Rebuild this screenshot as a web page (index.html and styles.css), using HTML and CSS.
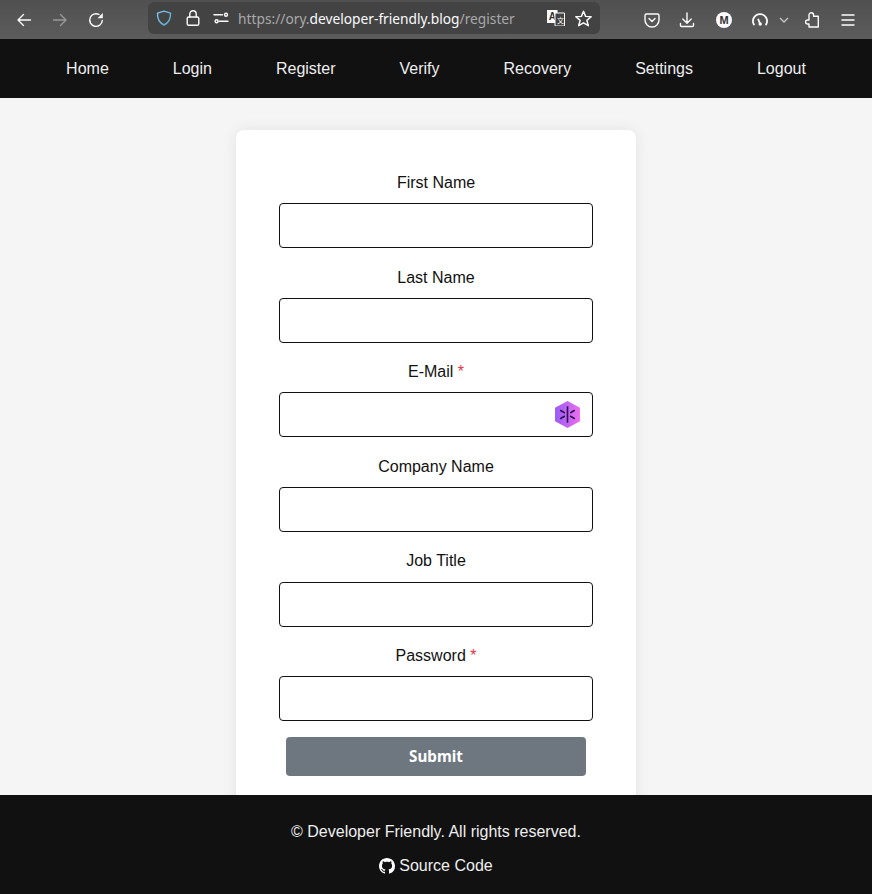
FILE: index.html
```html
<!DOCTYPE html>
<html lang="en">
<head>
<meta charset="utf-8">
<title>Register</title>
<link rel="stylesheet" href="styles.css">
</head>
<body>
<div class="chrome">
  <div class="chrome-left">
    <svg class="ic" viewBox="0 0 16 16"><path d="M14.5 8H2M7.5 2.5 2 8l5.500 5.500"/></svg>
    <svg class="ic dim" viewBox="0 0 16 16"><path d="M1.500 8H14M8.500 2.500 14 8l-5.500 5.500"/></svg>
    <svg class="ic" viewBox="0 0 16 16"><path d="M14.300 8.500A6.300 6.300 0 1 1 11 2.500"/><path class="fill" d="M14.800 1v5.300h-5.300z"/></svg>
  </div>
  <div class="urlbar">
    <svg class="ic shield" viewBox="0 0 16 16"><defs><linearGradient id="sg" x1="0" y1="0" x2="1" y2="1"><stop offset="0" stop-color="#7ec8f0"/><stop offset="1" stop-color="#5aa6c8"/></linearGradient></defs><path stroke="url(#sg)" d="M8 1.200 14.500 3.200C14.800 9 12.500 12.800 8 15 3.500 12.800 1.200 9 1.500 3.200z"/></svg>
    <svg class="ic lock" viewBox="0 0 16 16"><rect x="2.200" y="7" width="11.600" height="8.300" rx="1.500"/><path d="M4.800 7V4a3.200 3.200 0 0 1 6.400 0V7"/></svg>
    <svg class="ic perm" viewBox="0 0 16 16"><path d="M1 4.700h8.500M6 11.300h9"/><circle cx="13" cy="4.700" r="1.500"/><circle cx="3.600" cy="11.300" r="1.500"/></svg>
    <span class="url"><span class="url-dim">https://ory.</span>developer-friendly.blog<span class="url-dim">/register</span></span>
    <svg class="translate" viewBox="0 0 18 16"><path class="tr-a" d="M0 0h10.500v13H0z"/><text x="1.800" y="10" class="tr-t">A</text><path class="tr-b" d="M8 3h9.500v13H8z"/><text x="10" y="13" class="tr-u">文</text></svg>
    <svg class="ic star" viewBox="0 0 16 16"><path d="M8 1.200 10 6l5.200.4-4 3.400 1.300 5L8 12.100 3.500 14.800l1.300-5-4-3.400L6 6z"/></svg>
  </div>
  <div class="chrome-right">
    <svg class="ic pocket" viewBox="0 0 16 16"><path d="M1 3.500A1.500 1.500 0 0 1 2.500 2h11A1.500 1.500 0 0 1 15 3.500V8a7 7 0 0 1-14 0z"/><path d="M5 6.500 8 9.500l3-3"/></svg>
    <svg class="ic dl" viewBox="0 0 16 16"><path d="M8 1v10M3.800 7 8 11.200 12.200 7M1.500 11.500v2a1 1 0 0 0 1 1h11a1 1 0 0 0 1-1v-2"/></svg>
    <span class="avatar">M</span>
    <svg class="ic gauge" viewBox="0 0 16 16"><path d="M1.900 12.500A7 7 0 1 1 14.100 12.500"/><path d="M6.300 7.500 8 11.500"/><circle class="fill" cx="8.200" cy="12" r="1.700"/></svg>
    <svg class="chev" viewBox="0 0 10 6"><path d="M1 1l4 4 4-4"/></svg>
    <svg class="ic ext" viewBox="0 0 16 16"><path d="M6 4.200V3a2.300 2.300 0 0 1 4.600 0v1.200h4.700V15H6v-3H4.600a2 2 0 0 1 0-4H6z"/></svg>
    <svg class="ic menu" viewBox="0 0 16 16"><path d="M2 3h12M2 8h12M2 13h12"/></svg>
  </div>
</div>
<nav class="nav">
  <a href="#">Home</a>
  <a href="#">Login</a>
  <a href="#">Register</a>
  <a href="#">Verify</a>
  <a href="#">Recovery</a>
  <a href="#">Settings</a>
  <a href="#">Logout</a>
</nav>
<main class="main">
  <form class="card">
    <div class="field"><label>First Name</label><div class="control"></div></div>
    <div class="field"><label>Last Name</label><div class="control"></div></div>
    <div class="field"><label>E-Mail <span class="req">*</span></label><div class="control">
      <svg class="hex" viewBox="0 0 24 26"><defs><linearGradient id="hg" x1="0" y1="0" x2="1" y2="0"><stop offset="0" stop-color="#9a5cf5"/><stop offset="1" stop-color="#ee6cf0"/></linearGradient></defs><path fill="url(#hg)" d="M12 0 24 6.500v13L12 26 0 19.500v-13z"/><path class="hex-l" d="M12 5v16M5 9l4.500 2.500M19 9l-4.500 2.500M5 17l4.500-2.500M19 17l-4.500-2.500"/></svg>
    </div></div>
    <div class="field"><label>Company Name</label><div class="control"></div></div>
    <div class="field"><label>Job Title</label><div class="control"></div></div>
    <div class="field"><label>Password <span class="req">*</span></label><div class="control"></div></div>
    <button type="button" class="submit">Submit</button>
  </form>
</main>
<footer class="footer">
  <p>© Developer Friendly. All rights reserved.</p>
  <a href="#" class="source"><svg class="gh" viewBox="0 0 16 16"><path d="M8 0C3.580 0 0 3.580 0 8c0 3.540 2.290 6.530 5.470 7.590.4.070.55-.17.55-.38 0-.19-.01-.82-.01-1.490-2.010.37-2.530-.49-2.690-.94-.09-.23-.48-.94-.82-1.130-.28-.15-.68-.52-.01-.53.630-.01 1.080.58 1.230.82.720 1.210 1.870.870 2.330.66.070-.52.280-.87.510-1.070-1.780-.2-3.640-.89-3.640-3.950 0-.87.310-1.590.82-2.150-.08-.2-.36-1.020.08-2.120 0 0 .67-.21 2.200.82.640-.18 1.320-.27 2-.27s1.360.09 2 .27c1.530-1.040 2.200-.82 2.200-.82.440 1.100.16 1.920.08 2.120.51.560.82 1.270.82 2.150 0 3.070-1.870 3.750-3.650 3.950.290.25.540.730.540 1.480 0 1.070-.01 1.930-.01 2.200 0 .21.150.460.550.380A8.013 8.013 0 0 0 16 8c0-4.420-3.580-8-8-8z"/></svg> Source Code</a>
</footer>
</body>
</html>
```
FILE: styles.css
```css
* { box-sizing: border-box; }
html, body { margin: 0; height: 100%; }
body {
  display: flex;
  flex-direction: column;
  height: 894px;
  overflow: hidden;
  font-family: "Liberation Sans", Arial, sans-serif;
  font-size: 16px;
  color: #111;
  background: #f5f5f5;
}

/* browser toolbar */
.chrome {
  flex: 0 0 39px;
  display: flex;
  align-items: center;
  background: linear-gradient(#505050, #5c5c5c);
  padding: 0 20px 0 16px;
}
.chrome-left { display: flex; align-items: center; gap: 20px; width: 132px; flex: none; }
.ic {
  width: 16px;
  height: 16px;
  flex: none;
  fill: none;
  stroke: #fbfbfe;
  stroke-width: 1.4;
  stroke-linecap: round;
  stroke-linejoin: round;
}
.ic .fill { fill: #fbfbfe; stroke: none; }
.dim { opacity: 0.4; }
.urlbar {
  flex: 0 0 452px;
  height: 32px;
  margin-top: -3px;
  display: flex;
  align-items: center;
  background: #434343;
  border-radius: 6px;
  padding: 0 8px 0 8px;
}
.shield { margin-right: 13px; }
.lock { margin-right: 12px; }
.perm { margin-right: 9px; }
.url {
  flex: 1;
  font-family: "Noto Sans", sans-serif;
  font-size: 13.75px;
  color: #fbfbfe;
  white-space: nowrap;
}
.url-dim { color: #a9a9ab; }
.translate { width: 18px; height: 16px; margin-right: 10px; }
.tr-a { fill: #fbfbfe; }
.tr-b { fill: #434343; stroke: #fbfbfe; stroke-width: 1; }
.tr-t { font: bold 10px "Liberation Sans", sans-serif; fill: #333; }
.tr-u { font: 7px "Noto Sans CJK SC", sans-serif; fill: #fbfbfe; }
.star { width: 17px; height: 17px; }
.chrome-right { display: flex; align-items: center; margin-left: 44px; }
.pocket { margin-right: 19px; }
.dl { margin-right: 21px; }
.avatar {
  width: 16px;
  height: 16px;
  margin-right: 20px;
  border-radius: 50%;
  background: #fbfbfe;
  color: #333;
  font: bold 11px/16px "Liberation Sans", sans-serif;
  text-align: center;
}
.gauge { margin-right: 11px; stroke-width: 1.8; }
.chev { width: 10px; height: 6px; margin-right: 14px; fill: none; stroke: #c8c8c8; stroke-width: 1.3; }
.ext { margin-right: 21px; }

/* site nav */
.nav {
  flex: 0 0 59px;
  display: flex;
  align-items: center;
  justify-content: center;
  gap: 64px;
  background: #111;
}
.nav a { color: #eee; text-decoration: none; }

/* content */
.main {
  flex: 1;
  min-height: 0;
  overflow: hidden;
  display: flex;
  justify-content: center;
  padding-top: 32px;
}
.card {
  width: 400px;
  height: 720px;
  flex: none;
  display: flex;
  flex-direction: column;
  gap: 20.4px;
  padding: 44px 43px;
  background: #fff;
  border-radius: 8px;
  box-shadow: 0 0 15px rgba(0, 0, 0, 0.08);
}
.field { display: flex; flex-direction: column; }
.field label {
  line-height: 18.67px;
  margin-bottom: 10.53px;
  text-align: center;
}
.req { color: #dc3545; }
.control {
  height: 45px;
  display: flex;
  align-items: center;
  justify-content: flex-end;
  padding-right: 12px;
  border: 1px solid #111;
  border-radius: 4px;
  background: #fff;
}
.hex { width: 25px; height: 27px; }
.hex-l { fill: none; stroke: #2a1650; stroke-width: 1.600; }
.submit {
  width: 300px;
  height: 39px;
  margin: -4.4px auto 0;
  padding: 0 0 2px;
  border: 0;
  border-radius: 4px;
  background: #6e777f;
  color: #fff;
  font-family: "Noto Sans", sans-serif;
  font-weight: 700;
  font-size: 15.2px;
}

/* footer */
.footer {
  flex: 0 0 99px;
  display: flex;
  flex-direction: column;
  align-items: center;
  background: #111;
  color: #eee;
  padding-top: 28px;
}
.footer p { margin: 0 0 16px; line-height: 18px; }
.source { display: flex; align-items: center; gap: 4px; color: #eee; text-decoration: none; line-height: 18px; }
.gh { width: 16px; height: 16px; fill: #fff; }
```
